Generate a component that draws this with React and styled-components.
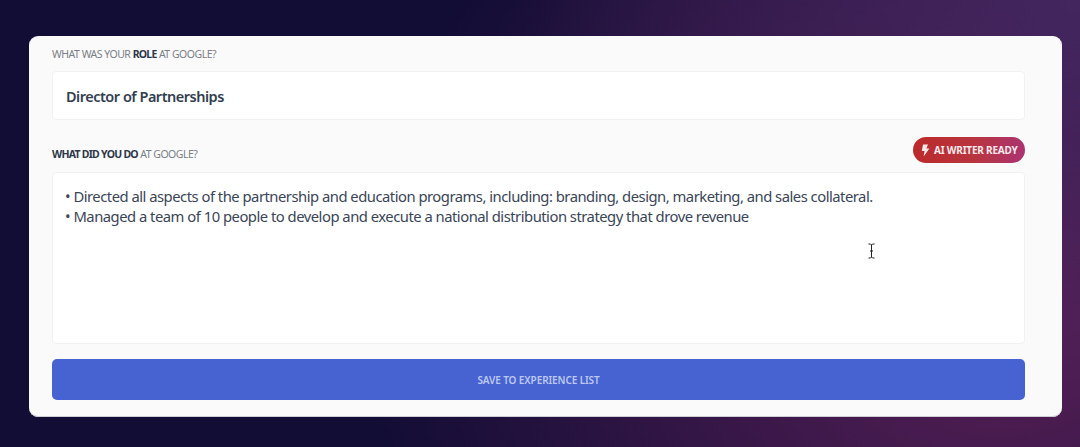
import React from 'react'
import styled, { createGlobalStyle } from 'styled-components'

const GlobalStyle = createGlobalStyle`
    html, body {
        margin: 0;
        padding: 0;
        height: 100%;
    }
`

const Page = styled.div`
    width: 1080px;
    height: 447px;
    box-sizing: border-box;
    padding: 36px 18px 30px 29px;
    overflow: hidden;
    font-family: "Noto Sans", sans-serif;
    background:
        radial-gradient(ellipse 560px 420px at 1080px 0px, #44265f 0%, rgba(68, 38, 95, 0) 100%),
        radial-gradient(ellipse 640px 560px at 1000px 300px, #5a2058 0%, rgba(90, 32, 88, 0) 100%),
        #120d35;
`

const Card = styled.div`
    position: relative;
    height: 100%;
    box-sizing: border-box;
    padding: 10px 37px 17px 23px;
    background: #fafafa;
    border-radius: 9px;
    box-shadow: inset 0 -1px 0 #cfcdd4;
    display: flex;
    flex-direction: column;
`

const Label = styled.div`
    font-size: 10.5px;
    line-height: 16px;
    color: #7b7f86;
    letter-spacing: -0.49px;
    text-transform: uppercase;

    b {
        color: #2d3748;
        font-weight: 700;
        letter-spacing: -0.74px;
    }
`

const Field = styled.div`
    box-sizing: border-box;
    background: #fff;
    border: 1px solid #f1f1f2;
    border-radius: 4px;
    color: #2d3748;
`

const RoleField = styled(Field)`
    height: 49px;
    margin-top: 9px;
    padding: 0 13px;
    display: flex;
    align-items: center;
    font-size: 14.5px;
    font-weight: 600;
    letter-spacing: -0.5px;
    color: #333e50;
`

const LabelRow = styled.div`
    height: 26px;
    margin-top: 17px;
    display: flex;
    align-items: flex-end;
    justify-content: space-between;

    ${Label} {
        margin-bottom: 1px;
    }
`

const Badge = styled.div`
    box-sizing: border-box;
    width: 112px;
    height: 26px;
    border-radius: 13px;
    padding-left: 8px;
    display: flex;
    align-items: center;
    gap: 4px;
    font-size: 10px;
    font-weight: 700;
    letter-spacing: -0.2px;
    color: #f6e9ec;
    white-space: nowrap;
    background: linear-gradient(90deg, #bb2a2a 0%, #b8353f 55%, #ab3371 100%);
`

const BodyField = styled(Field)`
    height: 172px;
    margin-top: 9px;
    padding: 13px 12px;
    font-size: 14.8px;
    line-height: 20px;
    letter-spacing: -0.5px;
    color: #3a4556;
`

const SaveButton = styled.button`
    height: 41px;
    margin-top: 15px;
    padding: 0;
    border: 0;
    border-radius: 5px;
    background: #4763d2;
    color: #bdc8ee;
    font-family: inherit;
    font-size: 10px;
    font-weight: 600;
    letter-spacing: -0.1px;
    text-transform: uppercase;
`

const Cursor = styled.svg`
    position: absolute;
    left: 838px;
    top: 207px;
`

const Bolt = () => (
    <svg width="9" height="13" viewBox="0 0 9 13">
        <path d="M2 0.5 L7 0.5 L5.4 4.6 L8.4 4.6 L2.6 12.6 L3.6 6.9 L0.8 6.9 Z" fill="#f6e9ec" />
    </svg>
)

const App = () => (
    <Page>
        <GlobalStyle />
        <Card>
            <Label>What was your <b>role</b> at Google?</Label>
            <RoleField>Director of Partnerships</RoleField>
            <LabelRow>
                <Label><b>What did you do</b> at Google?</Label>
                <Badge><Bolt />AI WRITER READY</Badge>
            </LabelRow>
            <BodyField>
                • Directed all aspects of the partnership and education programs, including: branding, design, marketing, and sales collateral.
                <br />
                • Managed a team of 10 people to develop and execute a national distribution strategy that drove revenue
            </BodyField>
            <SaveButton>Save to experience list</SaveButton>
            <Cursor width="9" height="16" viewBox="0 0 9 16">
                <path d="M1.5 1 H3.5 L4.5 2 L5.5 1 H7.5 M4.5 2 V14 M1.5 15 H3.5 L4.5 14 L5.5 15 H7.5 M3 8 H6" fill="none" stroke="#222" strokeWidth="1" />
            </Cursor>
        </Card>
    </Page>
)

export default App
